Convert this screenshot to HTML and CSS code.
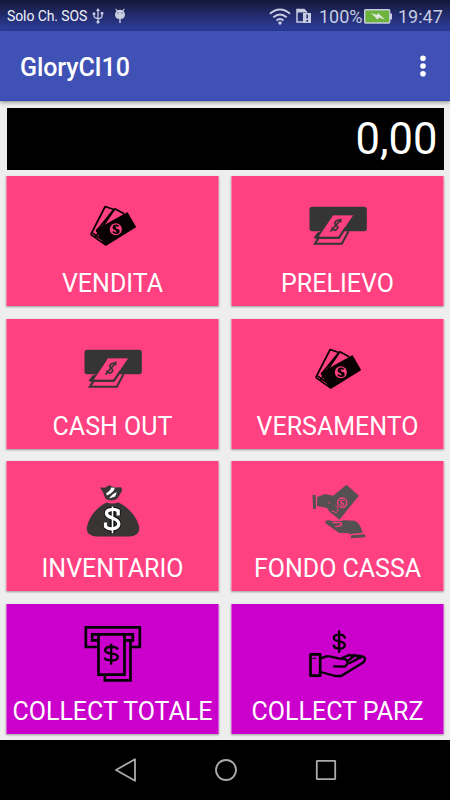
FILE: index.html
```html
<!DOCTYPE html>
<html lang="it">
<head>
<meta charset="utf-8">
<title>GloryCI10</title>
<link rel="stylesheet" href="styles.css">
</head>
<body>
<svg class="defs" aria-hidden="true">
  <symbol id="notes" viewBox="9.5 -1.5 240 192">
    <g stroke="#080003" stroke-width="5" stroke-linejoin="round" fill="none">
      <path d="M63 120 106 36 132 45 84 104M76 129 135 43 163 58M63 120 107 151 81 109M69 116 100 138"/>
      <path fill="#080003" d="M80 107 172 56 196 97 109 151Z"/>
    </g>
    <circle cx="138" cy="104" r="18" fill="#ff4081"/>
    <path d="M146 96C140 89 128 94 131 101S147 103 147 110 135 119 129 111M132 92 145 117" fill="none" stroke="#080003" stroke-width="5"/>
  </symbol>
  <symbol id="dispense" viewBox="7.5 -1.5 240 192">
    <rect x="42" y="37" width="172" height="73" rx="8" fill="#353535"/>
    <path d="M112 63H174L130 128H67Z" fill="#ff4081"/>
    <g fill="none" stroke="#353535" stroke-width="6">
      <path d="M108 67 65 130H130L172 65M71 113 57 131M69 131 58 148H139L159 110"/>
      <path d="M112 64H172L130 126H70Z" fill="#ff4081" stroke="none"/>
      <path d="M67 130H130L150 100"/>
      <path d="M137 83C134 73 119 77 118 86S130 92 126 101 111 108 108 99M138 73 105 111" stroke-width="5"/>
    </g>
  </symbol>
  <symbol id="bag" viewBox="7.5 13.5 240 192">
    <path d="M88 39 103 40 116 32 134 39 152 38 155 48 141 72Q124 84 105 73L97 52Z" fill="#393535"/>
    <path d="M108 84Q124 90 144 84C173 98 199 126 206 157Q209 184 178 186H78Q47 185 49 160C55 126 79 99 108 84Z" fill="#393535"/>
    <path d="M107 56Q119 50 122 39L133 40Q130 55 109 63ZM116 72Q127 55 139 53L134 66Z" fill="#fff"/>
    <path d="M143 123V109C132 101 107 104 108 117 109 133 145 128 145 148 145 165 115 167 105 156V144M126 96V176" fill="none" stroke="#111" stroke-width="15"/>
    <path d="M143 123V109C132 101 107 104 108 117 109 133 145 128 145 148 145 165 115 167 105 156V144" fill="none" stroke="#fff" stroke-width="10"/>
    <path d="M126 96V176" stroke="#fff" stroke-width="5"/>
  </symbol>
  <symbol id="exchange" viewBox="-6.5 12 240 192">
    <g fill="#555052">
      <path d="M37 60H47V102H39ZM51 66 75 57 99 62 139 29 176 62 118 134 89 111 80 99 51 93Z"/>
      <path d="M75 139Q83 132 97 139H121L130 136 164 137Q181 145 187 173L151 177 143 174H117L80 148Q74 144 75 139ZM153 181 195 178V187L152 190Z"/>
    </g>
    <path d="M84 81Q96 94 108 94 119 106 108 113L94 107" fill="none" stroke="#ff4081" stroke-width="3"/>
    <path d="M91 84Q105 87 111 102 106 111 94 105L84 94Z" fill="#555052"/>
    <path d="M97 143H122Q128 149 119 153L105 155" fill="none" stroke="#ff4081" stroke-width="4"/>
    <circle cx="126" cy="83" r="16" fill="#ff4081"/>
    <circle cx="126" cy="83" r="12" fill="#555052"/>
    <path d="M133 78C128 73 119 77 121 83S132 82 132 87 124 93 119 88M119 75 132 92" fill="none" stroke="#ff4081" stroke-width="3"/>
  </symbol>
  <symbol id="slot" viewBox="8.5 20 240 192">
    <g fill="none" stroke="#000" stroke-width="8">
      <path d="M83 95H47V36H209V95H183M83 75H66V57H188V75H165M85 57V178H163V57M104 180V195H181V75"/>
      <path d="M143 103C139 91 105 91 105 105 105 121 143 109 143 125 143 140 106 137 103 127M123 85V148" stroke-width="7"/>
    </g>
  </symbol>
  <symbol id="hand" viewBox="-6.5 20 240 192">
    <g fill="none" stroke="#000" stroke-width="7" stroke-linecap="round" stroke-linejoin="round">
      <rect x="31" y="117" width="29" height="64" stroke-width="8"/>
      <path d="M39 129H46" stroke-width="4"/>
      <path d="M62 129 78 123H88L115 129 132 131Q144 134 142 145L134 154 102 153M62 170 105 182H123L190 141Q200 129 188 123L149 143M126 128 147 119Q157 120 157 126L144 136M157 126 167 120Q178 121 176 129M157 121 163 119M171 124 180 121"/>
      <path d="M134 67C130 54 101 56 101 68 101 82 134 74 134 89 134 105 104 102 101 91M117 48V109"/>
    </g>
  </symbol>
</svg>
<header class="status">
  <span class="carrier">Solo Ch. SOS</span>
  <svg class="usb" viewBox="0 0 12 16"><g fill="none" stroke="currentColor" stroke-width="1.3"><path d="M6 2V14M2 6V8Q2 10 6 10.5M10 5V8Q10 10 6 11"/></g><path fill="currentColor" d="M6 0 8 3H4ZM.7 4.5H3.3V7H.7ZM8.7 4H11.3V6.5H8.7Z"/><circle cx="6" cy="14" r="1.6" fill="currentColor"/></svg>
  <svg class="droid" viewBox="0 0 12 16"><path fill="currentColor" d="M2.4 3 1.3.8 2 .4 3.3 2.2Q6 1.1 8.7 2.2L10 .4 10.7.8 9.6 3Q11 4.7 11 7.2 10.5 10.8 6.7 11V15H5.3V11Q1.5 10.8 1 7.2 1 4.7 2.4 3Z"/><path d="M3.4 5H4.4M7.6 5H8.6" stroke="#28317d"/></svg>
  <span class="spacer"></span>
  <svg class="wifi" viewBox="0 0 22 17"><g fill="none" stroke="currentColor" stroke-width="1.9"><path d="M1 5.8Q11-2.6 21 5.8M4.3 9.3Q11 3.7 17.7 9.3M7.5 12.5Q11 9.6 14.5 12.5"/></g><circle cx="11" cy="15" r="1.7" fill="currentColor"/></svg>
  <svg class="sim" viewBox="0 0 16 16"><path fill="none" stroke="currentColor" stroke-width="1.5" d="M7 14H1V1.5H8L11 4.5"/><path fill="currentColor" d="M1 1H8L11 4.5H1ZM7 5H15V15H7Z"/><path d="M11.2 6.5V10.5M11.2 12V13.7" stroke="#28317d" stroke-width="1.6"/></svg>
  <span class="percent">100%</span>
  <svg class="battery" viewBox="0 0 28 15"><rect x=".7" y=".7" width="25" height="13.3" rx="1" fill="#6cb33e" stroke="currentColor" stroke-width="1.4"/><path d="M26 4.5H28V10.5H26Z" fill="currentColor"/><path d="M7 4 13 6 14 4 21 10.5 15 8.5 13.5 10.5Z" fill="#e3e7e4"/></svg>
  <span class="clock">19:47</span>
</header>
<div class="appbar">
  <h1>GloryCI10</h1>
  <svg class="more" viewBox="0 0 6 22"><g fill="#fff"><circle cx="3" cy="3.3" r="2.8"/><circle cx="3" cy="11" r="2.8"/><circle cx="3" cy="18.7" r="2.8"/></g></svg>
</div>
<main>
  <div class="amount">0,00</div>
  <div class="grid">
    <div class="tile"><svg><use href="#notes"/></svg><span>VENDITA</span></div>
    <div class="tile"><svg><use href="#dispense"/></svg><span>PRELIEVO</span></div>
    <div class="tile"><svg><use href="#dispense"/></svg><span>CASH OUT</span></div>
    <div class="tile"><svg><use href="#notes"/></svg><span>VERSAMENTO</span></div>
    <div class="tile"><svg><use href="#bag"/></svg><span>INVENTARIO</span></div>
    <div class="tile"><svg><use href="#exchange"/></svg><span>FONDO CASSA</span></div>
    <div class="tile collect"><svg><use href="#slot"/></svg><span>COLLECT TOTALE</span></div>
    <div class="tile collect"><svg><use href="#hand"/></svg><span>COLLECT PARZ</span></div>
  </div>
</main>
<nav>
  <svg viewBox="0 0 24 24"><path d="M2 12 21 1.2V22.8Z"/></svg>
  <svg viewBox="0 0 24 24"><circle cx="12" cy="12" r="10"/></svg>
  <svg viewBox="0 0 24 24"><rect x="2.8" y="2.8" width="18.4" height="18.4" rx=".5"/></svg>
</nav>
</body>
</html>
```
FILE: styles.css
```css
* { box-sizing: border-box; }
body {
  margin: 0;
  width: 450px;
  height: 800px;
  overflow: hidden;
  display: flex;
  flex-direction: column;
  background: #eee;
  font-family: Roboto, sans-serif;
  color: #fff;
}
.defs { display: none; }
svg { display: block; flex: none; }
.status {
  flex: none;
  height: 31px;
  display: flex;
  align-items: center;
  padding: 1px 7px 0 7px;
  background: linear-gradient(#141839, #303f9f);
  color: #c8cce0;
}
.carrier { font-size: 14px; color: #f0f1f8; width: 85px; white-space: nowrap; letter-spacing: -.1px; }
.usb { width: 12px; height: 16px; }
.droid { width: 12px; height: 16px; margin-left: 10px; }
.spacer { flex: 1; }
.wifi { width: 22px; height: 17px; margin-right: 5px; }
.sim { width: 16px; height: 16px; margin-right: 7px; }
.percent { font-size: 18px; width: 45px; white-space: nowrap; }
.battery { width: 28px; height: 15px; margin-right: 6px; }
.clock { font-size: 18px; width: 45px; white-space: nowrap; }
.appbar {
  flex: none;
  height: 70px;
  display: flex;
  align-items: center;
  justify-content: space-between;
  padding: 0 24.5px 0 20px;
  background: #3f51b5;
  border-bottom: 1px solid #3048b5;
  box-shadow: 0 1px 4px rgba(0, 0, 0, .45);
}
h1 { margin: 0; padding-top: 3px; font-size: 25px; letter-spacing: -.1px; font-weight: 500; }
.more { width: 6px; height: 22px; margin-top: 1px; }
main { flex: none; height: 639px; padding: 7px 6px 0; }
.amount {
  height: 62px;
  margin: 0 .5px;
  background: #000;
  padding-right: 6px;
  line-height: 63px;
  font-size: 43.5px;
  text-align: right;
}
.grid {
  display: grid;
  grid-template-columns: 1fr 1fr;
  grid-auto-rows: 130px;
  gap: 12.5px 12px;
  padding-top: 6px;
}
.tile {
  display: flex;
  flex-direction: column;
  align-items: center;
  padding-top: 18px;
  background: #ff4081;
  border: solid rgba(238, 238, 238, .4);
  border-width: 0 1px;
  box-shadow: 0 1px 2px rgba(0, 0, 0, .35);
}
.collect { background-color: #c0c; }
.tile svg { width: 80px; height: 64px; }
.tile span { margin-top: 11px; font-size: 25px; line-height: 30px; white-space: nowrap; }
nav {
  flex: none;
  height: 60px;
  display: flex;
  justify-content: center;
  align-items: center;
  gap: 76px;
  padding-left: 1px;
  background: #000;
}
nav svg { width: 24px; height: 24px; fill: none; stroke: #aaa; stroke-width: 1.8; stroke-linejoin: round; }
```
